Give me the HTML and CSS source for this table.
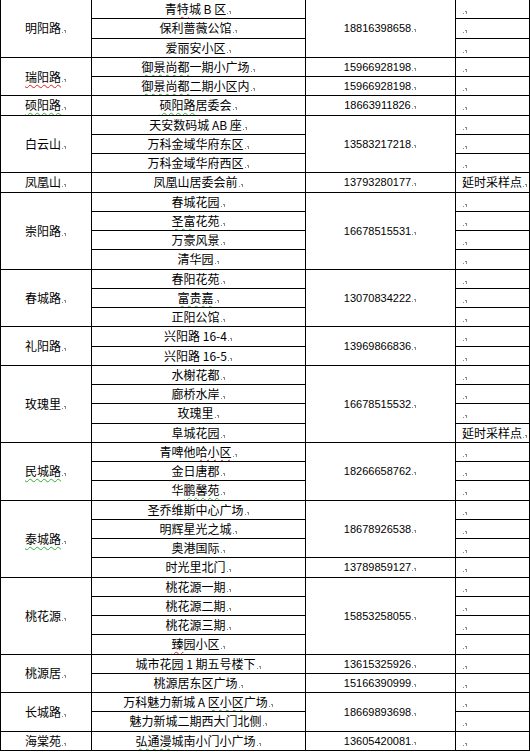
FILE: index.html
```html
<!DOCTYPE html>
<html lang="zh-CN">
<head>
<meta charset="utf-8">
<title>采样点</title>
<link rel="stylesheet" href="styles.css">
</head>
<body>
<table class="sheet">
<colgroup><col class="c1"><col class="c2"><col class="c3"><col class="c4"></colgroup>
<tbody>
<tr><td rowspan="3" class="area">明阳路<i class="pm"></i></td><td class="site">青<u class="wr">特</u>城 B 区<i class="pm"></i></td><td rowspan="3" class="tel">18816398658<i class="pm"></i></td><td class="note"><i class="pm"></i></td></tr>
<tr><td class="site">保利蔷薇公馆<i class="pm"></i></td><td class="note"><i class="pm"></i></td></tr>
<tr><td class="site">爱丽安小区<i class="pm"></i></td><td class="note"><i class="pm"></i></td></tr>
<tr><td rowspan="2" class="area"><u class="wr">瑞阳路</u><i class="pm"></i></td><td class="site"><u class="wg">御景尚都</u>一期小广场<i class="pm"></i></td><td class="tel">15966928198<i class="pm"></i></td><td class="note"><i class="pm"></i></td></tr>
<tr><td class="site"><u class="wg">御景尚都</u>二期小区内<i class="pm"></i></td><td class="tel">15966928198<i class="pm"></i></td><td class="note"><i class="pm"></i></td></tr>
<tr><td class="area"><u class="wg">硕阳路</u><i class="pm"></i></td><td class="site"><u class="wg">硕阳路</u>居委会<i class="pm"></i></td><td class="tel">18663911826<i class="pm"></i></td><td class="note"><i class="pm"></i></td></tr>
<tr><td rowspan="3" class="area">白云山<i class="pm"></i></td><td class="site">天安数码城 AB 座<i class="pm"></i></td><td rowspan="3" class="tel">13583217218<i class="pm"></i></td><td class="note"><i class="pm"></i></td></tr>
<tr><td class="site">万科金域华府东区<i class="pm"></i></td><td class="note"><i class="pm"></i></td></tr>
<tr><td class="site">万科金域华府西区<i class="pm"></i></td><td class="note"><i class="pm"></i></td></tr>
<tr><td class="area">凤凰山<i class="pm"></i></td><td class="site">凤凰山居委会前<i class="pm"></i></td><td class="tel">13793280177<i class="pm"></i></td><td class="note">延时采样点<i class="pm"></i></td></tr>
<tr><td rowspan="4" class="area">崇阳路<i class="pm"></i></td><td class="site">春城花园<i class="pm"></i></td><td rowspan="4" class="tel">16678515531<i class="pm"></i></td><td class="note"><i class="pm"></i></td></tr>
<tr><td class="site"><u class="wg">圣富</u>花苑<i class="pm"></i></td><td class="note"><i class="pm"></i></td></tr>
<tr><td class="site">万豪风景<i class="pm"></i></td><td class="note"><i class="pm"></i></td></tr>
<tr><td class="site">清华园<i class="pm"></i></td><td class="note"><i class="pm"></i></td></tr>
<tr><td rowspan="3" class="area">春城路<i class="pm"></i></td><td class="site">春阳花苑<i class="pm"></i></td><td rowspan="3" class="tel">13070834222<i class="pm"></i></td><td class="note"><i class="pm"></i></td></tr>
<tr><td class="site"><u class="wg">富贵嘉</u><i class="pm"></i></td><td class="note"><i class="pm"></i></td></tr>
<tr><td class="site">正阳公馆<i class="pm"></i></td><td class="note"><i class="pm"></i></td></tr>
<tr><td rowspan="2" class="area">礼阳路<i class="pm"></i></td><td class="site">兴阳路 16-4<i class="pm"></i></td><td rowspan="2" class="tel">13969866836<i class="pm"></i></td><td class="note"><i class="pm"></i></td></tr>
<tr><td class="site">兴阳路 16-5<i class="pm"></i></td><td class="note"><i class="pm"></i></td></tr>
<tr><td rowspan="4" class="area">玫瑰里<i class="pm"></i></td><td class="site">水榭花都<i class="pm"></i></td><td rowspan="4" class="tel">16678515532<i class="pm"></i></td><td class="note"><i class="pm"></i></td></tr>
<tr><td class="site">廊桥水岸<i class="pm"></i></td><td class="note"><i class="pm"></i></td></tr>
<tr><td class="site">玫瑰里<i class="pm"></i></td><td class="note"><i class="pm"></i></td></tr>
<tr><td class="site">阜城花园<i class="pm"></i></td><td class="note">延时采样点<i class="pm"></i></td></tr>
<tr><td rowspan="3" class="area"><u class="wg">民城路</u><i class="pm"></i></td><td class="site">青啤他<u class="wr">哈小区</u><i class="pm"></i></td><td rowspan="3" class="tel">18266658762<i class="pm"></i></td><td class="note"><i class="pm"></i></td></tr>
<tr><td class="site">金日唐郡<i class="pm"></i></td><td class="note"><i class="pm"></i></td></tr>
<tr><td class="site">华<u class="wg">鹏馨苑</u><i class="pm"></i></td><td class="note"><i class="pm"></i></td></tr>
<tr><td rowspan="4" class="area"><u class="wg">泰城路</u><i class="pm"></i></td><td class="site">圣乔维斯中心广场<i class="pm"></i></td><td rowspan="3" class="tel">18678926538<i class="pm"></i></td><td class="note"><i class="pm"></i></td></tr>
<tr><td class="site">明辉星光之城<i class="pm"></i></td><td class="note"><i class="pm"></i></td></tr>
<tr><td class="site">奥港国际<i class="pm"></i></td><td class="note"><i class="pm"></i></td></tr>
<tr><td class="site">时光里北门<i class="pm"></i></td><td class="tel">13789859127<i class="pm"></i></td><td class="note"><i class="pm"></i></td></tr>
<tr><td rowspan="4" class="area">桃花源<i class="pm"></i></td><td class="site">桃花源一期<i class="pm"></i></td><td rowspan="4" class="tel">15853258055<i class="pm"></i></td><td class="note"><i class="pm"></i></td></tr>
<tr><td class="site">桃花源二期<i class="pm"></i></td><td class="note"><i class="pm"></i></td></tr>
<tr><td class="site">桃花源三期<i class="pm"></i></td><td class="note"><i class="pm"></i></td></tr>
<tr><td class="site"><u class="wr">臻</u>园小区<i class="pm"></i></td><td class="note"><i class="pm"></i></td></tr>
<tr><td rowspan="2" class="area">桃源居<i class="pm"></i></td><td class="site">城市花园 1 期五号楼下<i class="pm"></i></td><td class="tel">13615325926<i class="pm"></i></td><td class="note"><i class="pm"></i></td></tr>
<tr><td class="site">桃源居东区广场<i class="pm"></i></td><td class="tel">15166390999<i class="pm"></i></td><td class="note"><i class="pm"></i></td></tr>
<tr><td rowspan="2" class="area">长城路<i class="pm"></i></td><td class="site">万科魅力新城 A <u class="wg">区小区</u>广场<i class="pm"></i></td><td rowspan="2" class="tel">18669893698<i class="pm"></i></td><td class="note"><i class="pm"></i></td></tr>
<tr><td class="site">魅力新城二期西大门北侧<i class="pm"></i></td><td class="note"><i class="pm"></i></td></tr>
<tr><td class="area">海棠苑<i class="pm"></i></td><td class="site"><u class="wg">弘通漫</u>城南小门小广场<i class="pm"></i></td><td class="tel">13605420081<i class="pm"></i></td><td class="note"><i class="pm"></i></td></tr>
</tbody>
</table>
</body>
</html>
```

FILE: styles.css
```css
html, body {
  margin: 0;
  padding: 0;
  background: #fff;
}

body {
  font-family: "Noto Sans CJK SC", "Liberation Sans", sans-serif;
  font-size: 12px;
  color: #000;
}

.sheet {
  border-collapse: collapse;
  table-layout: fixed;
  width: 529px;
  margin-top: -1px;
}

.c1 { width: 91px; }
.c2 { width: 214px; }
.c3 { width: 150px; }
.c4 { width: 74px; }

.sheet tr {
  height: 19.26px;
}

.sheet td {
  border: 1px solid #000;
  padding: 0;
  line-height: 14px;
  vertical-align: middle;
  white-space: nowrap;
  overflow: hidden;
}

.area,
.site,
.tel {
  text-align: center;
}

.tel {
  font-family: "Liberation Sans", sans-serif;
  font-size: 11px;
}

.note {
  text-align: left;
  padding-left: 6px;
}

.sheet .note {
  padding-left: 6px;
}

.pm {
  display: inline-block;
  width: 5px;
  height: 4px;
  margin-left: 1px;
  vertical-align: baseline;
  background:
    linear-gradient(#8a8a8a, #8a8a8a) 0 100% / 1px 1px no-repeat,
    linear-gradient(#8a8a8a, #8a8a8a) 3px 100% / 1px 3px no-repeat,
    linear-gradient(#8a8a8a, #8a8a8a) 2px 1px / 1px 1px no-repeat;
}

u {
  text-decoration-line: underline;
  text-decoration-style: wavy;
  text-decoration-thickness: 1px;
  text-underline-offset: 2px;
}

.wr { text-decoration-color: #e02020; }
.wg { text-decoration-color: #30b030; }
```
